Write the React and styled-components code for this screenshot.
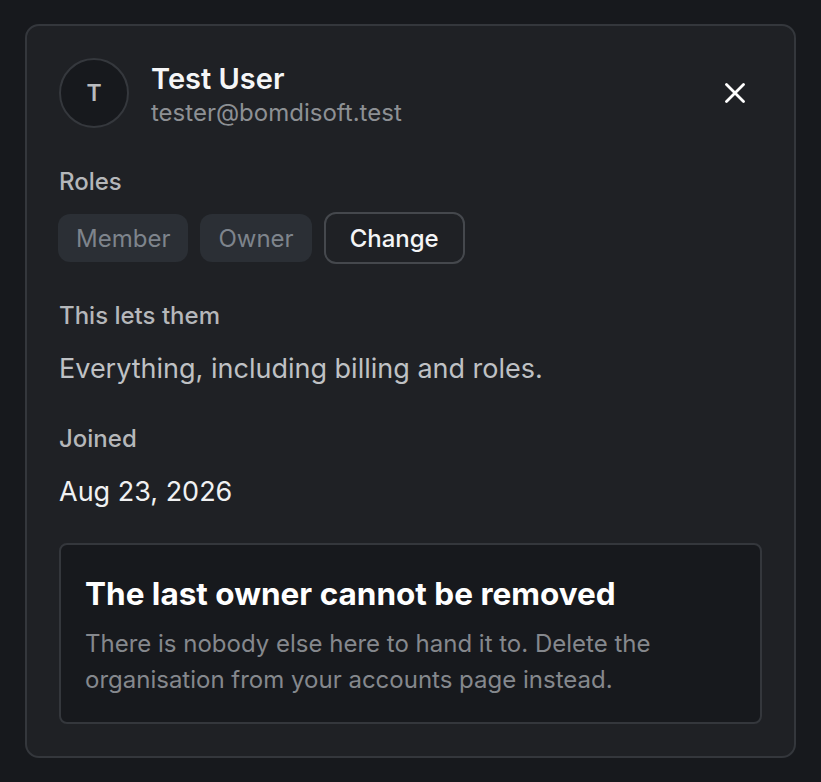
import React from 'react';
import styled, { createGlobalStyle } from 'styled-components';

const GlobalStyle = createGlobalStyle`
  body {
    margin: 0;
    background: #17191d;
    font-family: Inter, "Noto Sans", sans-serif;
    -webkit-font-smoothing: antialiased;
  }
`;

const Page = styled.div`
  padding: 24px 25px;
`;

const Card = styled.section`
  width: 771px;
  box-sizing: border-box;
  background: #1f2125;
  border: 2px solid #34373c;
  border-radius: 14px;
  padding: 32px;
  display: flex;
  flex-direction: column;
`;

const Header = styled.div`
  display: flex;
  align-items: center;
  gap: 22px;
`;

const Avatar = styled.div`
  width: 70px;
  height: 70px;
  box-sizing: border-box;
  border-radius: 50%;
  background: #17191d;
  border: 2px solid #35383d;
  display: flex;
  align-items: center;
  justify-content: center;
  color: #b9bbbe;
  font-size: 23px;
  font-weight: 600;
  flex-shrink: 0;
`;

const Who = styled.div`
  flex: 1;
  display: flex;
  flex-direction: column;
  gap: 2px;
  padding-top: 4px;
`;

const Name = styled.div`
  color: #f5f6f7;
  font-size: 29px;
  font-weight: 600;
  line-height: 34px;
`;

const Email = styled.div`
  color: #8d9094;
  font-size: 24px;
  line-height: 30px;
`;

const CloseButton = styled.button`
  width: 36px;
  height: 36px;
  margin-right: 9px;
  padding: 0;
  border: none;
  background: transparent;
  display: flex;
  align-items: center;
  justify-content: center;
  cursor: pointer;
`;

const Label = styled.div`
  color: #b5b7ba;
  font-size: 24px;
  font-weight: 500;
  line-height: 28px;
  margin-top: ${(p) => p.$top}px;
`;

const Chips = styled.div`
  display: flex;
  align-items: center;
  gap: 12px;
  margin-top: 16px;
  margin-left: -1px;
`;

const Chip = styled.span`
  height: 48px;
  padding: 0 18px;
  box-sizing: border-box;
  display: flex;
  align-items: center;
  border-radius: 12px;
  background: #2b2f35;
  color: #7e848c;
  font-size: 24px;
`;

const ChangeButton = styled.button`
  height: 52px;
  padding: 0 24px;
  border: 2px solid #45484d;
  border-radius: 12px;
  background: transparent;
  color: #f4f5f6;
  font-family: inherit;
  font-size: 24px;
  font-weight: 500;
  cursor: pointer;
`;

const Value = styled.div`
  color: ${(p) => (p.$bright ? '#f0f1f2' : '#bfc1c4')};
  font-size: 27px;
  line-height: 34px;
  margin-top: 22px;
`;

const Notice = styled.div`
  margin-top: 34px;
  background: #17191d;
  border: 2px solid #34373c;
  border-radius: 8px;
  padding: 31px 24px 24px;
`;

const NoticeTitle = styled.h3`
  margin: 0;
  color: #ffffff;
  font-size: 31.5px;
  font-weight: 700;
  line-height: 36px;
`;

const NoticeText = styled.p`
  margin: 14px 0 0;
  color: #85888d;
  font-size: 24px;
  line-height: 36px;
`;

const CloseIcon = () => (
  <svg width="20" height="20" viewBox="0 0 20 20" fill="none">
    <path d="M1.5 1.5 18.5 18.5M18.5 1.5 1.5 18.5" stroke="#ffffff" strokeWidth="2.8" strokeLinecap="round" />
  </svg>
);

export default function App() {
  return (
    <Page>
      <GlobalStyle />
      <Card>
        <Header>
          <Avatar>T</Avatar>
          <Who>
            <Name>Test User</Name>
            <Email>tester@bomdisoft.test</Email>
          </Who>
          <CloseButton aria-label="Close">
            <CloseIcon />
          </CloseButton>
        </Header>

        <Label $top={40}>Roles</Label>
        <Chips>
          <Chip>Member</Chip>
          <Chip>Owner</Chip>
          <ChangeButton>Change</ChangeButton>
        </Chips>

        <Label $top={38}>This lets them</Label>
        <Value>Everything, including billing and roles.</Value>

        <Label $top={39}>Joined</Label>
        <Value $bright>Aug 23, 2026</Value>

        <Notice>
          <NoticeTitle>The last owner cannot be removed</NoticeTitle>
          <NoticeText>
            There is nobody else here to hand it to. Delete the
            <br />
            organisation from your accounts page instead.
          </NoticeText>
        </Notice>
      </Card>
    </Page>
  );
}
